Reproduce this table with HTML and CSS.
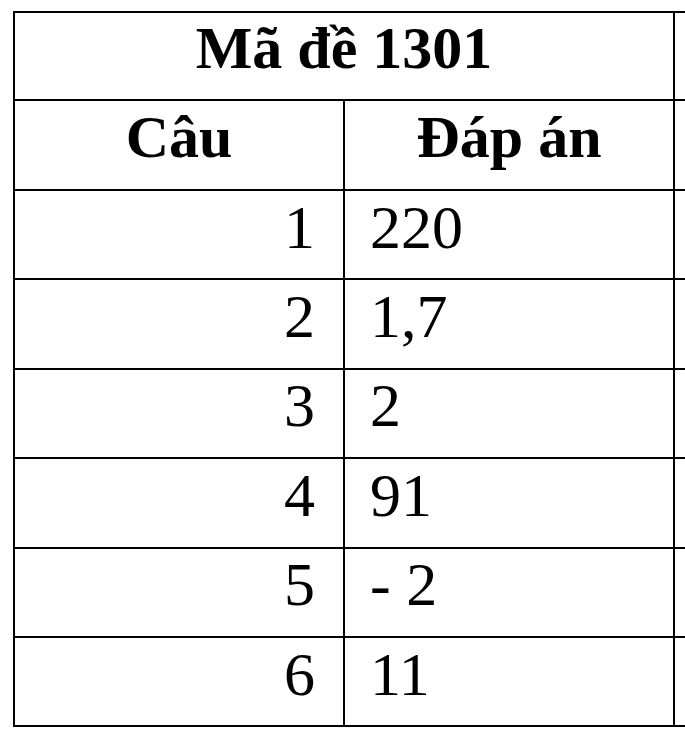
FILE: index.html
```html
<!DOCTYPE html>
<html lang="vi">
<head>
<meta charset="utf-8">
<title>Mã đề 1301</title>
<link rel="stylesheet" href="styles.css">
</head>
<body>
<table class="answers">
  <colgroup>
    <col class="col-q">
    <col class="col-a">
    <col class="col-extra">
  </colgroup>
  <tr class="row-title">
    <th class="title" colspan="2">Mã đề 1301</th>
    <td class="extra"></td>
  </tr>
  <tr class="row-head">
    <th class="head">Câu</th>
    <th class="head">Đáp án</th>
    <td class="extra"></td>
  </tr>
  <tr class="row"><td class="num">1</td><td class="ans">220</td><td class="extra"></td></tr>
  <tr class="row"><td class="num">2</td><td class="ans">1,7</td><td class="extra"></td></tr>
  <tr class="row"><td class="num">3</td><td class="ans">2</td><td class="extra"></td></tr>
  <tr class="row"><td class="num">4</td><td class="ans">91</td><td class="extra"></td></tr>
  <tr class="row"><td class="num">5</td><td class="ans">- 2</td><td class="extra"></td></tr>
  <tr class="row"><td class="num">6</td><td class="ans">11</td><td class="extra"></td></tr>
</table>
</body>
</html>
```
FILE: styles.css
```css
html, body {
  margin: 0;
  padding: 0;
  background: #ffffff;
  overflow: hidden;
}

body {
  font-family: "Liberation Serif", "Times New Roman", serif;
  color: #000000;
}

.answers {
  border-collapse: collapse;
  table-layout: fixed;
  width: 672px;
  margin: 11px 0 0 13px;
}

.col-q { width: 330px; }
.col-a { width: 330px; }
.col-extra { width: 12px; }

.answers th,
.answers td {
  border: 2px solid #000000;
  padding: 0 0 16px 0;
  vertical-align: middle;
  line-height: 1;
}

.answers td.extra {
  border-right: none;
}

.row-title { height: 88px; }
.row-head { height: 90px; }
.row { height: 89.4px; }

.title,
.head {
  font-weight: bold;
  font-size: 60px;
  text-align: center;
}

.answers td.num {
  font-size: 62px;
  text-align: right;
  padding-right: 28px;
}

.answers td.ans {
  font-size: 62px;
  text-align: left;
  padding-left: 25px;
}
```
